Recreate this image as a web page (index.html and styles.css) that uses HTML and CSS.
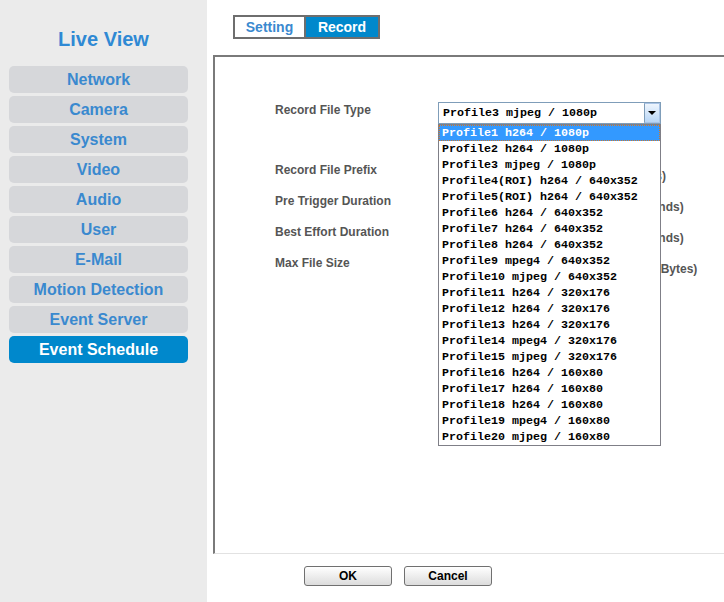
FILE: index.html
```html
<!DOCTYPE html>
<html>
<head>
<meta charset="utf-8">
<link rel="stylesheet" href="styles.css">
</head>
<body>
<div class="page">
  <aside class="sidebar">
    <h1 class="brand">Live View</h1>
    <nav class="menu">
      <a class="menu-item">Network</a>
      <a class="menu-item">Camera</a>
      <a class="menu-item">System</a>
      <a class="menu-item">Video</a>
      <a class="menu-item">Audio</a>
      <a class="menu-item">User</a>
      <a class="menu-item">E-Mail</a>
      <a class="menu-item">Motion Detection</a>
      <a class="menu-item">Event Server</a>
      <a class="menu-item active">Event Schedule</a>
    </nav>
  </aside>
  <main class="main">
    <div class="tabs">
      <span class="tab">Setting</span>
      <span class="tab active">Record</span>
    </div>
    <section class="panel">
      <div class="form">
        <div class="row row-first">
          <span class="label">Record File Type</span>
          <div class="value">
            <div class="select">
              <span class="select-text">Profile3 mjpeg / 1080p</span>
              <span class="select-arrow"><span class="tri"></span></span>
              <ul class="list">
                <li class="opt selected">Profile1 h264 / 1080p</li>
                <li class="opt">Profile2 h264 / 1080p</li>
                <li class="opt">Profile3 mjpeg / 1080p</li>
                <li class="opt">Profile4(ROI) h264 / 640x352</li>
                <li class="opt">Profile5(ROI) h264 / 640x352</li>
                <li class="opt">Profile6 h264 / 640x352</li>
                <li class="opt">Profile7 h264 / 640x352</li>
                <li class="opt">Profile8 h264 / 640x352</li>
                <li class="opt">Profile9 mpeg4 / 640x352</li>
                <li class="opt">Profile10 mjpeg / 640x352</li>
                <li class="opt">Profile11 h264 / 320x176</li>
                <li class="opt">Profile12 h264 / 320x176</li>
                <li class="opt">Profile13 h264 / 320x176</li>
                <li class="opt">Profile14 mpeg4 / 320x176</li>
                <li class="opt">Profile15 mjpeg / 320x176</li>
                <li class="opt">Profile16 h264 / 160x80</li>
                <li class="opt">Profile17 h264 / 160x80</li>
                <li class="opt">Profile18 h264 / 160x80</li>
                <li class="opt">Profile19 mpeg4 / 160x80</li>
                <li class="opt">Profile20 mjpeg / 160x80</li>
              </ul>
            </div>
          </div>
        </div>
        <div class="row">
          <span class="label">Record File Prefix</span>
          <div class="value"><span class="input w-prefix"></span><span class="unit">(chars)</span></div>
        </div>
        <div class="row">
          <span class="label">Pre Trigger Duration</span>
          <div class="value"><span class="input w-sec"></span><span class="unit">(seconds)</span></div>
        </div>
        <div class="row">
          <span class="label">Best Effort Duration</span>
          <div class="value"><span class="input w-sec"></span><span class="unit">(seconds)</span></div>
        </div>
        <div class="row">
          <span class="label">Max File Size</span>
          <div class="value"><span class="input w-size"></span><span class="unit">(KBytes)</span></div>
        </div>
      </div>
    </section>
    <div class="actions">
      <button class="btn">OK</button>
      <button class="btn">Cancel</button>
    </div>
  </main>
</div>
</body>
</html>
```
FILE: styles.css
```css
html, body {
  margin: 0;
  padding: 0;
  background: #ffffff;
  font-family: "Liberation Sans", Arial, sans-serif;
}

.page {
  display: flex;
  width: 724px;
  height: 602px;
  overflow: hidden;
}

.sidebar {
  width: 207px;
  flex: none;
  background: #ebebeb;
  padding-top: 27px;
  box-sizing: border-box;
}

.brand {
  margin: 0 0 15px 0;
  height: 24px;
  line-height: 24px;
  font-size: 20px;
  font-weight: bold;
  color: #2f89d4;
  text-align: center;
}

.menu {
  display: flex;
  flex-direction: column;
  gap: 3px;
  margin-left: 9px;
  width: 179px;
}

.menu-item {
  display: block;
  height: 27px;
  line-height: 27px;
  border-radius: 5px;
  background: #d6d7da;
  color: #3a89cf;
  font-size: 16px;
  font-weight: bold;
  text-align: center;
}

.menu-item.active {
  background: #0088cc;
  color: #ffffff;
}

.main {
  flex: 1;
  min-width: 0;
  overflow: hidden;
  padding-left: 6px;
  display: flex;
  flex-direction: column;
  align-items: flex-start;
}

.tabs {
  display: inline-flex;
  margin: 15px 0 0 20px;
  border: 2px solid #6e6e6e;
}

.tab {
  display: block;
  width: 69px;
  height: 20px;
  line-height: 20px;
  text-align: center;
  font-size: 14px;
  font-weight: bold;
  color: #3a89cf;
  background: #ffffff;
}

.tab.active {
  width: 72px;
  border-left: 2px solid #6e6e6e;
  background: #0088cc;
  color: #ffffff;
}

.panel {
  margin-top: 16px;
  width: 560px;
  height: 499px;
  flex: none;
  box-sizing: border-box;
  border-top: 2px solid #7a7a7a;
  border-left: 2px solid #7a7a7a;
  border-bottom: 1px solid #e2e2e2;
  padding: 45px 0 0 60px;
}

.form {
  display: flex;
  flex-direction: column;
}

.row {
  display: flex;
  align-items: flex-start;
  height: 31px;
}

.row-first {
  height: 60px;
}

.label {
  width: 163px;
  flex: none;
  line-height: 16px;
  font-size: 12px;
  font-weight: bold;
  color: #555555;
}

.value {
  display: flex;
  align-items: flex-start;
  gap: 5px;
}

.input {
  display: block;
  height: 20px;
  box-sizing: border-box;
  border: 1px solid #7f9db9;
}

.w-prefix { width: 183px; }
.w-sec { width: 184px; }
.w-size { width: 205px; }

.unit {
  padding-top: 6px;
  line-height: 16px;
  font-size: 12px;
  font-weight: bold;
  color: #555555;
  white-space: nowrap;
}

.select {
  position: relative;
  width: 223px;
  height: 22px;
  box-sizing: border-box;
  border: 1px solid #7f9db9;
  background: #ffffff;
}

.select-text {
  display: block;
  padding-left: 4px;
  line-height: 20px;
  font-family: "Liberation Mono", "Courier New", monospace;
  font-size: 11.67px;
  font-weight: bold;
  color: #000000;
  white-space: pre;
}

.select-arrow {
  position: absolute;
  top: 0;
  right: 0;
  width: 16px;
  height: 20px;
  box-sizing: border-box;
  border: 1px solid #a9c4e6;
  border-left-color: #7f9db9;
  background: linear-gradient(#eef5fd, #b8d6f6);
  display: flex;
  align-items: center;
  justify-content: center;
}

.tri {
  width: 0;
  height: 0;
  border-left: 4px solid transparent;
  border-right: 4px solid transparent;
  border-top: 4px solid #000000;
}

.list {
  position: absolute;
  z-index: 10;
  top: 21px;
  left: -1px;
  width: 223px;
  margin: 0;
  padding: 0;
  list-style: none;
  box-sizing: border-box;
  border: 1px solid #7f7f87;
  background: #ffffff;
}

.opt {
  height: 16px;
  line-height: 16px;
  padding-left: 3px;
  box-sizing: border-box;
  font-family: "Liberation Mono", "Courier New", monospace;
  font-size: 11.67px;
  font-weight: bold;
  color: #000000;
  white-space: pre;
}

.opt.selected {
  background: #3399ff;
  color: #ffffff;
  border: 1px dotted #d0782a;
  line-height: 14px;
  padding-left: 2px;
}

.actions {
  display: flex;
  gap: 12px;
  margin: 12px 0 0 91px;
}

.btn {
  width: 88px;
  height: 20px;
  padding: 0;
  box-sizing: border-box;
  border: 1px solid #707070;
  border-radius: 3px;
  background: linear-gradient(#ffffff, #dcdcdc);
  font-family: "Liberation Sans", Arial, sans-serif;
  font-size: 12px;
  font-weight: bold;
  color: #000000;
}
```
